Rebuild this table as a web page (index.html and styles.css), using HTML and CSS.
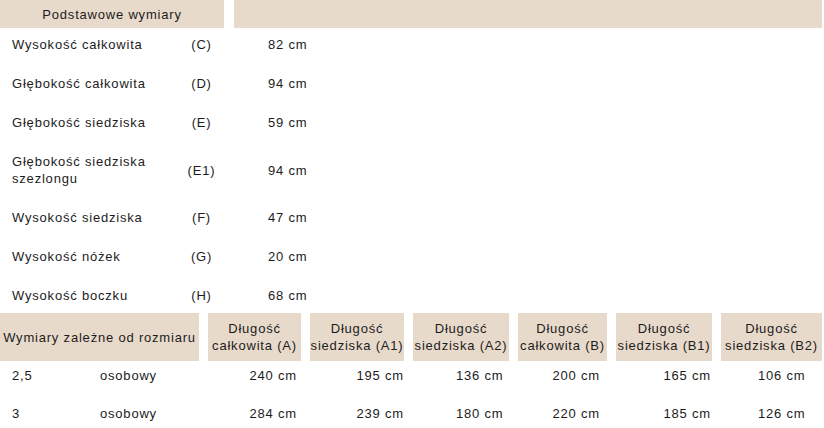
FILE: index.html
```html
<!DOCTYPE html>
<html lang="pl">
<head>
<meta charset="utf-8">
<title>Wymiary</title>
<link rel="stylesheet" href="styles.css">
</head>
<body>
<div class="page">
  <section class="basic">
    <div class="basic-head">
      <div class="hcell main">Podstawowe wymiary</div>
      <div class="hcell rest"></div>
    </div>
    <div class="basic-body">
      <div class="brow"><div class="lbl">Wysokość całkowita</div><div class="code">(C)</div><div class="val">82 cm</div></div>
      <div class="brow"><div class="lbl">Głębokość całkowita</div><div class="code">(D)</div><div class="val">94 cm</div></div>
      <div class="brow"><div class="lbl">Głębokość siedziska</div><div class="code">(E)</div><div class="val">59 cm</div></div>
      <div class="brow"><div class="lbl">Głębokość siedziska<br>szezlongu</div><div class="code">(E1)</div><div class="val">94 cm</div></div>
      <div class="brow"><div class="lbl">Wysokość siedziska</div><div class="code">(F)</div><div class="val">47 cm</div></div>
      <div class="brow"><div class="lbl">Wysokość nóżek</div><div class="code">(G)</div><div class="val">20 cm</div></div>
      <div class="brow last"><div class="lbl">Wysokość boczku</div><div class="code">(H)</div><div class="val">68 cm</div></div>
    </div>
  </section>
  <section class="sizes">
    <div class="shead wide">Wymiary zależne od rozmiaru</div>
    <div class="shead">Długość<br>całkowita (A)</div>
    <div class="shead">Długość<br>siedziska (A1)</div>
    <div class="shead">Długość<br>siedziska (A2)</div>
    <div class="shead">Długość<br>całkowita (B)</div>
    <div class="shead">Długość<br>siedziska (B1)</div>
    <div class="shead">Długość<br>siedziska (B2)</div>

    <div class="sc size">2,5</div>
    <div class="sc kind">osobowy</div>
    <div class="sc num c1">240 cm</div>
    <div class="sc num c2">195 cm</div>
    <div class="sc num c3">136 cm</div>
    <div class="sc num c4">200 cm</div>
    <div class="sc num c5">165 cm</div>
    <div class="sc num c6">106 cm</div>

    <div class="sc size">3</div>
    <div class="sc kind">osobowy</div>
    <div class="sc num c1">284 cm</div>
    <div class="sc num c2">239 cm</div>
    <div class="sc num c3">180 cm</div>
    <div class="sc num c4">220 cm</div>
    <div class="sc num c5">185 cm</div>
    <div class="sc num c6">126 cm</div>
  </section>
</div>
</body>
</html>
```
FILE: styles.css
```css
html, body {
  margin: 0;
  padding: 0;
  background: #ffffff;
}

body {
  font-family: "Liberation Sans", Arial, Helvetica, sans-serif;
  font-size: 13px;
  line-height: 17px;
  letter-spacing: 0.8px;
  color: #1c1c1c;
}

.page {
  width: 822px;
}

/* ---------- basic dimensions ---------- */
.basic-head {
  display: flex;
  gap: 10px;
}

.hcell {
  background: #e8dacb;
  height: 28px;
  box-sizing: border-box;
  padding: 6px 0 5px;
  text-align: center;
  white-space: nowrap;
}

.hcell.main {
  width: 224px;
}

.hcell.rest {
  flex: 1;
}

.brow {
  display: grid;
  grid-template-columns: 179px 45px 1fr;
  padding: 8px 0 14px;
}

.brow.last {
  padding-bottom: 9px;
}

.lbl {
  padding-left: 12px;
}

.code {
  display: flex;
  align-items: center;
  justify-content: center;
}

.val {
  display: flex;
  align-items: center;
  padding-left: 44px;
}

/* ---------- size dependent dimensions ---------- */
.sizes {
  display: grid;
  grid-template-columns: 88px 102px 93px 94px 96px 89px 96px 101px;
  column-gap: 9px;
}

.shead {
  background: #e8dacb;
  height: 48px;
  box-sizing: border-box;
  padding: 7px 0;
  display: flex;
  align-items: center;
  justify-content: center;
  text-align: center;
  white-space: nowrap;
}

.shead.wide {
  grid-column: span 2;
}

.sc {
  padding: 6px 0 15px;
  white-space: nowrap;
}

.size {
  padding-left: 12px;
}

.kind {
  padding-left: 3px;
}

.num {
  text-align: right;
}

.c1 { padding-right: 4px; }
.c2 { padding-right: 0; }
.c3 { padding-right: 5.5px; }
.c4 { padding-right: 7px; }
.c5 { padding-right: 1px; }
.c6 { padding-right: 16.5px; }
```
